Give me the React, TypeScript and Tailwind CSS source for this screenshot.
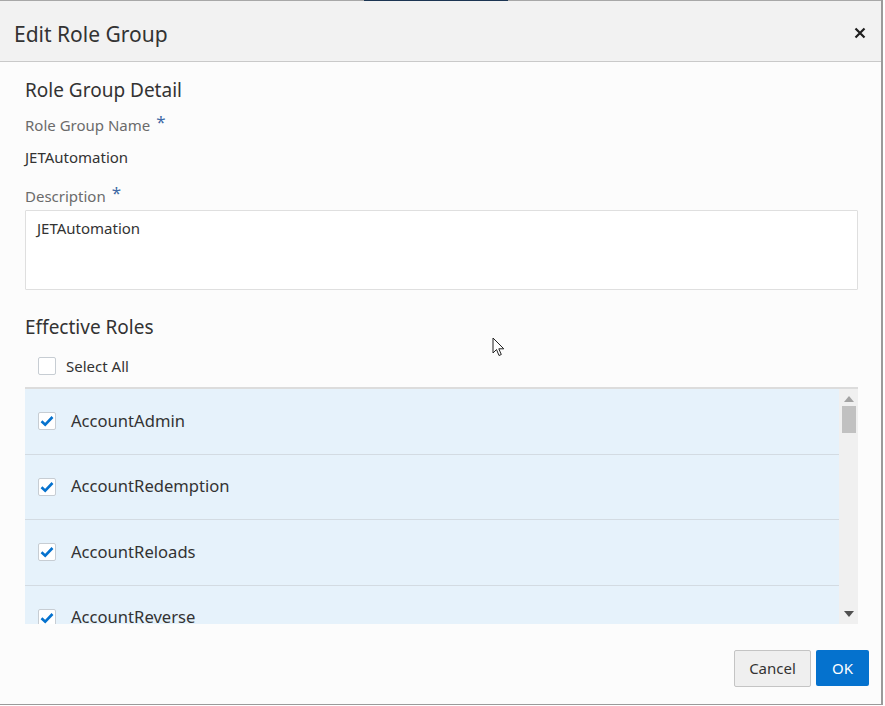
import React from 'react';

const roles = ['AccountAdmin', 'AccountRedemption', 'AccountReloads', 'AccountReverse'];

const Check: React.FC<{ checked?: boolean }> = ({ checked }) => (
  <span className="w-[18px] h-[18px] shrink-0 flex items-center justify-center bg-white border border-[#c7cdd3] rounded-[2px]">
    {checked && (
      <svg width="14" height="12" viewBox="0 0 14 12">
        <path d="M1.5 6.2 L5.2 9.6 L12.5 2" fill="none" stroke="#0572ce" strokeWidth="2.6" />
      </svg>
    )}
  </span>
);

const Label: React.FC<{ text: string }> = ({ text }) => (
  <div className="h-[26px] leading-[26px] text-[15px] text-[#6b6b6b]">
    {text}
    <span className="ml-[6px] text-[#3f6aa6] text-[17px] relative top-[-3px]">*</span>
  </div>
);

export default function App() {
  return (
    <div className="w-[885px] h-[706px] bg-white overflow-hidden" style={{ fontFamily: '"Noto Sans", "Open Sans", sans-serif' }}>
      <div className="relative w-[883px] h-[705px] flex flex-col bg-[#fcfcfc] border-r-2 border-b border-[#9a9a9a]">
        {/* top edge */}
        <div className="flex h-[1px] shrink-0">
          <div className="w-[364px] bg-[#a8a8a8]" />
          <div className="w-[144px] bg-[#1c3553]" />
          <div className="flex-1 bg-[#a8a8a8]" />
        </div>

        {/* header */}
        <div className="h-[61px] shrink-0 flex items-center justify-between pl-[14px] pr-[14px] bg-[#f2f2f2] border-b border-[#c9c9c9]">
          <h1 className="text-[21px] text-[#333] leading-none pt-[6px]">Edit Role Group</h1>
          <svg width="12" height="12" viewBox="0 0 12 12" className="mr-[1px] mt-[4px]">
            <path d="M1.5 1.5 L10.5 10.5 M10.5 1.5 L1.5 10.5" stroke="#1f1f1f" strokeWidth="2.2" />
          </svg>
        </div>

        {/* body */}
        <div className="flex-1 min-h-0 flex flex-col pl-[25px] pr-[23px]">
          <div className="mt-[14px] h-[28px] leading-[28px] text-[19px] text-[#333]">Role Group Detail</div>
          <div className="mt-[8px]"><Label text="Role Group Name" /></div>
          <div className="mt-[7px] h-[24px] leading-[24px] text-[15px] text-[#333]">JETAutomation</div>
          <div className="mt-[14px]"><Label text="Description" /></div>
          <div className="mt-[1px] h-[80px] shrink-0 bg-white border border-[#dfdfdf] rounded-[1px] px-[11px] pt-[6px] text-[15px] leading-[22px] text-[#333]">
            JETAutomation
          </div>

          <div className="mt-[23px] h-[28px] leading-[28px] text-[19px] text-[#333]">Effective Roles</div>
          <div className="mt-[14px] h-[22px] flex items-center gap-[10px] pl-[13px] text-[15px] text-[#333]">
            <Check />
            <span>Select All</span>
          </div>

          {/* list */}
          <div className="mt-[10px] flex-1 min-h-0 flex border-t-2 border-[#dcdcdc] overflow-hidden">
            <div className="flex-1 overflow-hidden">
              {roles.map((r) => (
                <div key={r} className="h-[65.5px] flex items-center gap-[15px] pl-[13px] bg-[#e6f2fb] border-b border-[#d3dbe2]">
                  <Check checked />
                  <span className="text-[16.6px] text-[#333]">{r}</span>
                </div>
              ))}
            </div>
            <div className="w-[19px] bg-[#f0f0f0] flex flex-col items-center">
              <svg width="10" height="6" viewBox="0 0 10 6" className="mt-[7px]">
                <path d="M0 6 L5 0 L10 6 Z" fill="#a3a3a3" />
              </svg>
              <div className="mt-[4px] w-[14px] h-[27px] bg-[#c1c1c1]" />
              <div className="flex-1" />
              <svg width="10" height="6" viewBox="0 0 10 6" className="mb-[7px]">
                <path d="M0 0 L10 0 L5 6 Z" fill="#505050" />
              </svg>
            </div>
          </div>
        </div>

        {/* footer */}
        <div className="h-[80px] shrink-0 flex justify-end items-start pt-[26px] pr-[12px] gap-[5px]">
          <button className="w-[77px] h-[37px] bg-[#efefef] border border-[#c4c4c4] rounded-[2px] text-[15px] text-[#333]">
            Cancel
          </button>
          <button className="w-[53px] h-[36px] bg-[#0572ce] rounded-[2px] text-[15px] text-white">OK</button>
        </div>

        {/* mouse pointer */}
        <svg width="14" height="21" viewBox="0 0 14 21" className="absolute left-[492px] top-[337px]">
          <path d="M1 1 L1 16 L4.5 12.5 L7 18.5 L9.3 17.5 L6.8 11.8 L11.8 11.8 Z" fill="white" stroke="#222" strokeWidth="1" />
        </svg>
      </div>
    </div>
  );
}
